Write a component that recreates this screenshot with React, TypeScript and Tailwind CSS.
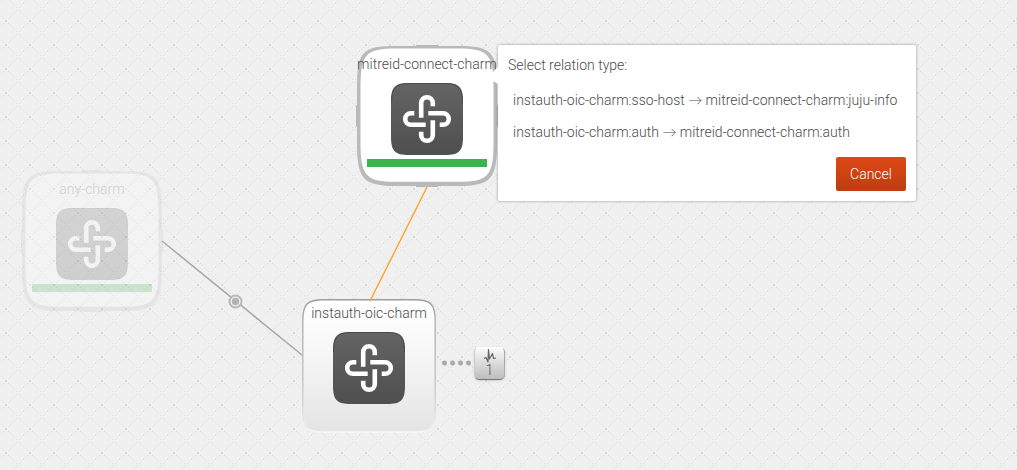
type Point = [number, number];

const PATTERN_DOTS: Point[] = [0, 1, 2, 3, 4].flatMap((i): Point[] => {
  const right = 8 + i * 2;
  const left = (27 - i * 2) % 24;
  const up = 18 - i * 2;
  const down = (23 + i * 2) % 24;
  return [
    [right, up],
    [left, up],
    [right, down],
    [left, down],
  ];
});

function Wires() {
  return (
    <svg className="absolute inset-0 h-full w-full" aria-hidden="true">
      <defs>
        <pattern id="grid" width="24" height="24" patternUnits="userSpaceOnUse" shapeRendering="crispEdges">
          <rect x="5" y="20" width="2" height="2" fill="#dcdcdc" />
          {PATTERN_DOTS.map(([x, y]) => (
            <rect key={`${x}-${y}`} x={x} y={y} width="1" height="1" fill="#dcdcdc" />
          ))}
        </pattern>
      </defs>
      <rect width="100%" height="100%" fill="url(#grid)" />
      <path d="M162 241L302 355" stroke="#a7a7a7" strokeWidth="1.5" />
      <circle cx="235.500" cy="301.500" r="6" fill="#f0f0f0" stroke="#b8b8b8" strokeWidth="2" />
      <circle cx="235.500" cy="301.500" r="3.700" fill="#b4b4b4" />
      {[444.5, 452.5, 460.5, 468.5].map((x) => (
        <circle key={x} cx={x} cy="363" r="2.200" fill="#a6adb2" stroke="#9a9a9a" strokeWidth="0.500" />
      ))}
    </svg>
  );
}

function CharmIcon() {
  return (
    <svg viewBox="0 0 72 72" className="h-[72px] w-[72px]" aria-hidden="true">
      <defs>
        <linearGradient id="charm" x1="0" y1="0" x2="0" y2="1">
          <stop offset="0" stopColor="#646464" />
          <stop offset="1" stopColor="#4f4f4f" />
        </linearGradient>
      </defs>
      <path
        d="M0 18C0 4 4 0 18 0H54C68 0 72 4 72 18V54C72 68 68 72 54 72H18C4 72 0 68 0 54Z"
        fill="url(#charm)"
      />
      <path d="M0.500 20C0.500 5 5 0.500 18 0.500H54C67 0.500 71.500 5 71.500 20" fill="none" stroke="#4a4a4a" strokeWidth="1" />
      {[0, 90, 180, 270].map((angle) => (
        <path
          key={angle}
          d="M30.200 34.700V20a5.800 5.800 0 0 1 11.600 0V23.300"
          transform={`rotate(${angle} 36 36)`}
          fill="none"
          stroke="#fff"
          strokeWidth="4.600"
        />
      ))}
    </svg>
  );
}

function RelatedFrame() {
  return (
    <svg viewBox="0 0 142 142" className="absolute inset-0 h-full w-full" aria-hidden="true">
      <path d="M60 0H82V2H60ZM60 140H82V142H60ZM0 60H2V82H0ZM140 60H142V82H140Z" fill="#b8b8b8" />
      <path
        d="M1 42C1 6 7 1 40 1H102C135 1 141 6 141 42V98C141 134 135 141 102 141H40C7 141 1 134 1 98Z"
        fill="#bababa"
      />
      <path
        d="M4.500 42C4.500 9 10 3.500 40 3.500H102C132 3.500 137.500 9 137.500 42V98C137.500 131 132 136.800 102 136.800H40C10 136.800 4.500 131 4.500 98Z"
        fill="#fff"
      />
    </svg>
  );
}

function PlainFrame() {
  return (
    <svg viewBox="0 0 134 134" className="absolute inset-0 h-full w-full" aria-hidden="true">
      <defs>
        <linearGradient id="plain-fill" x1="0" y1="0" x2="0" y2="1">
          <stop offset="0" stopColor="#fff" />
          <stop offset="0.350" stopColor="#f8f8f8" />
          <stop offset="1" stopColor="#e4e4e4" />
        </linearGradient>
        <linearGradient id="plain-edge" x1="0" y1="0" x2="0" y2="1">
          <stop offset="0" stopColor="#9c9c9c" />
          <stop offset="0.150" stopColor="#b4b4b4" />
          <stop offset="0.600" stopColor="#c6c6c6" />
          <stop offset="0.850" stopColor="#dedede" />
          <stop offset="1" stopColor="#f6f6f6" />
        </linearGradient>
      </defs>
      <path
        d="M0.800 22C0.800 5 5 0.800 22 0.800H112C129 0.800 133.200 5 133.200 22V111C133.200 129 129 133 112 133H22C5 133 0.800 129 0.800 111Z"
        fill="url(#plain-fill)"
        stroke="url(#plain-edge)"
        strokeWidth="1.500"
      />
    </svg>
  );
}

function RelatedService({ name, className }: { name: string; className: string }) {
  return (
    <section className={`absolute flex h-[142px] w-[142px] flex-col items-center pt-[9px] ${className}`}>
      <RelatedFrame />
      <h2 className="relative text-sm leading-5 whitespace-nowrap">{name}</h2>
      <div className="relative mt-[9px]">
        <CharmIcon />
      </div>
      <div className="relative mt-1 h-2 w-[120px] bg-[#38b44a]" />
    </section>
  );
}

function RelationOption({ from, to }: { from: string; to: string }) {
  return (
    <li>
      <button type="button" className="block w-full px-[5px] py-1.5 text-left text-sm leading-5 whitespace-nowrap">
        {from} <span className="font-['Lato',sans-serif]">→</span> {to}
      </button>
    </li>
  );
}

export default function App() {
  return (
    <main className="relative min-h-screen overflow-hidden bg-[#f0f0f0] font-['Roboto',sans-serif] font-light text-[#4c4c4c]">
      <Wires />

      <RelatedService name="any-charm" className="top-[170px] left-[21px] opacity-20" />
      <RelatedService name="mitreid-connect-charm" className="top-[45px] left-[356px]" />

      <section className="absolute top-[299px] left-[302px] flex h-[134px] w-[134px] flex-col items-center pt-1">
        <PlainFrame />
        <h2 className="relative text-sm leading-5 whitespace-nowrap">instauth-oic-charm</h2>
        <div className="relative mt-[9px]">
          <CharmIcon />
        </div>
      </section>

      <svg className="pointer-events-none absolute inset-0 h-full w-full" aria-hidden="true">
        <path d="M427 187L370 301" stroke="#fca62f" strokeWidth="1.500" />
      </svg>

      <div className="absolute top-[347px] left-[474px] flex h-[33px] w-[31px] flex-col items-center rounded-[5px] border border-t-white border-r-[#aaa] border-b-[#777] border-l-[#ccc] bg-linear-to-b from-[#fafafa] to-[#bdbdbd] shadow-sm">
        <svg viewBox="0 0 14 15" className="h-[15px] w-[14px]" aria-hidden="true">
          <path
            d="M1 10.500L3 9.500L5 14L5.500 1.500L6.500 11L9.500 5.500L10.500 10.500L13 10"
            fill="none"
            stroke="#666"
            strokeWidth="1.200"
            strokeLinejoin="round"
          />
        </svg>
        <span className="text-sm leading-[14px] text-[#555]">1</span>
      </div>

      <div
        role="dialog"
        aria-labelledby="relation-title"
        className="absolute top-[45px] left-[498px] flex w-[418px] flex-col gap-[9px] rounded-xs bg-white p-2.5 shadow-[0_0_3px_rgba(0,0,0,0.4)]"
      >
        <svg viewBox="0 0 5 18" className="absolute top-[22px] -left-[5px] h-[18px] w-[5px]" aria-hidden="true">
          <path d="M5 0L0 5V14L5 17Z" fill="#fff" />
        </svg>
        <h1 id="relation-title" className="text-sm leading-5">
          Select relation type:
        </h1>
        <ul>
          <RelationOption from="instauth-oic-charm:sso-host" to="mitreid-connect-charm:juju-info" />
          <RelationOption from="instauth-oic-charm:auth" to="mitreid-connect-charm:auth" />
        </ul>
        <button
          type="button"
          className="w-[70px] self-end rounded-xs bg-linear-to-b from-[#dd4814] to-[#bf3d11] py-[7px] text-sm leading-5 text-white"
        >
          Cancel
        </button>
      </div>
    </main>
  );
}
